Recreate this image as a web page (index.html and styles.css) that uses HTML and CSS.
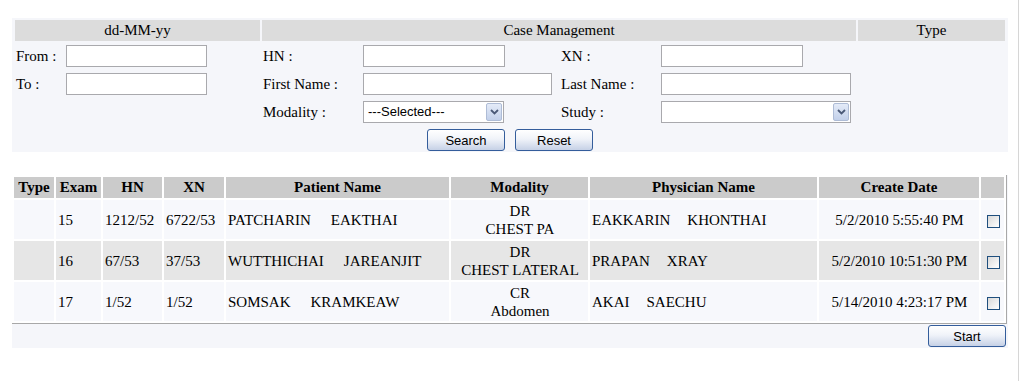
FILE: index.html
```html
<!DOCTYPE html>
<html lang="en">
<head>
  <meta charset="UTF-8">
  <title>Case Management</title>
  <link rel="stylesheet" href="styles.css">
</head>
<body>
  <div class="page">

    <!-- search form -->
    <div class="search-panel">
      <div class="hd">dd-MM-yy</div>
      <div class="hd">Case Management</div>
      <div class="hd">Type</div>

      <div class="date-fields">
        <label>From :</label>
        <input class="txt w141" type="text">
        <label>To :</label>
        <input class="txt w141" type="text">
      </div>

      <div class="case-fields">
        <label>HN :</label>
        <div><input class="txt w142" type="text"></div>
        <label>XN :</label>
        <div><input class="txt w142" type="text"></div>

        <label>First Name :</label>
        <div><input class="txt w189" type="text"></div>
        <label>Last Name :</label>
        <div><input class="txt w190" type="text"></div>

        <label>Modality :</label>
        <div>
          <div class="select w141">
            <span class="select-text">---Selected---</span>
            <span class="select-btn"><svg width="9" height="6" viewBox="0 0 9 6"><polyline points="1,1 4.5,4.5 8,1" fill="none" stroke="#4a5977" stroke-width="1.8"/></svg></span>
          </div>
        </div>
        <label>Study :</label>
        <div>
          <div class="select w190">
            <span class="select-text"></span>
            <span class="select-btn"><svg width="9" height="6" viewBox="0 0 9 6"><polyline points="1,1 4.5,4.5 8,1" fill="none" stroke="#4a5977" stroke-width="1.8"/></svg></span>
          </div>
        </div>
      </div>

      <div></div>

      <div class="buttons">
        <button class="btn">Search</button>
        <button class="btn">Reset</button>
      </div>
    </div>

    <!-- result list -->
    <div class="results">
      <table class="grid">
        <thead>
          <tr>
            <th class="c-type">Type</th>
            <th class="c-exam">Exam</th>
            <th class="c-hn">HN</th>
            <th class="c-xn">XN</th>
            <th class="c-pat">Patient Name</th>
            <th class="c-mod">Modality</th>
            <th class="c-phy">Physician Name</th>
            <th class="c-date">Create Date</th>
            <th class="c-chk"></th>
          </tr>
        </thead>
        <tbody>
          <tr>
            <td></td>
            <td>15</td>
            <td>1212/52</td>
            <td>6722/53</td>
            <td><span>PATCHARIN</span><span class="last">EAKTHAI</span></td>
            <td class="center">DR<br>CHEST PA</td>
            <td><span>EAKKARIN</span><span class="last-sm">KHONTHAI</span></td>
            <td class="center">5/2/2010 5:55:40 PM</td>
            <td class="center"><span class="check"></span></td>
          </tr>
          <tr class="alt">
            <td></td>
            <td>16</td>
            <td>67/53</td>
            <td>37/53</td>
            <td><span>WUTTHICHAI</span><span class="last">JAREANJIT</span></td>
            <td class="center">DR<br>CHEST LATERAL</td>
            <td><span>PRAPAN</span><span class="last-sm">XRAY</span></td>
            <td class="center">5/2/2010 10:51:30 PM</td>
            <td class="center"><span class="check"></span></td>
          </tr>
          <tr>
            <td></td>
            <td>17</td>
            <td>1/52</td>
            <td>1/52</td>
            <td><span>SOMSAK</span><span class="last">KRAMKEAW</span></td>
            <td class="center">CR<br>Abdomen</td>
            <td><span>AKAI</span><span class="last-sm">SAECHU</span></td>
            <td class="center">5/14/2010 4:23:17 PM</td>
            <td class="center"><span class="check"></span></td>
          </tr>
        </tbody>
      </table>
      <div class="actions">
        <button class="btn">Start</button>
      </div>
    </div>

  </div>
</body>
</html>
```

FILE: styles.css
```css
body {
  margin: 0;
  background: #fff;
  color: #000;
  font-family: 'Liberation Serif', 'Times New Roman', serif;
  font-size: 15px;
}

.page {
  width: 1019px;
  min-height: 381px;
  border-right: 1px solid #d6d6d6;
  padding-top: 18px;
  box-sizing: border-box;
}

/* ---- search form ---- */
.search-panel {
  margin-left: 12px;
  width: 996px;
  box-sizing: border-box;
  padding: 2px 3px 1px;
  background: #f5f6fa;
  display: grid;
  grid-template-columns: 245px 594px 1fr;
  column-gap: 2px;
}

.hd {
  background: #dcdcdc;
  height: 21px;
  line-height: 21px;
  text-align: center;
}

.date-fields {
  margin-top: 4px;
  padding-left: 1px;
  display: grid;
  grid-template-columns: 50px 141px;
  grid-auto-rows: 22px;
  row-gap: 6px;
  align-items: center;
}

.case-fields {
  margin-top: 4px;
  padding-left: 1px;
  display: grid;
  grid-template-columns: 100px 198px 100px 192px;
  grid-auto-rows: 22px;
  row-gap: 6px;
  align-items: center;
}

.case-fields > div {
  display: flex;
}

.txt {
  height: 22px;
  box-sizing: border-box;
  border: 1px solid #a9a9ad;
  background: #fff;
  margin: 0;
  padding: 0 3px;
  font-family: 'Liberation Sans', Arial, sans-serif;
  font-size: 13px;
}

.w141 { width: 141px; }
.w142 { width: 142px; }
.w189 { width: 189px; }
.w190 { width: 190px; }

.select {
  height: 22px;
  box-sizing: border-box;
  border: 1px solid #a9a9ad;
  background: #fff;
  display: flex;
  align-items: stretch;
  padding: 1px;
  font-family: 'Liberation Sans', Arial, sans-serif;
  font-size: 13px;
}

.select-text {
  flex: 1;
  padding-left: 3px;
  line-height: 18px;
}

.select-btn {
  width: 16px;
  box-sizing: border-box;
  border: 1px solid #aebcd6;
  border-radius: 2px;
  background: linear-gradient(#e4ebf8, #c2d0ea);
  display: flex;
  align-items: center;
  justify-content: center;
}

.buttons {
  grid-column: 1 / -1;
  margin-top: 6px;
  display: flex;
  justify-content: center;
  gap: 10px;
}

.btn {
  width: 78px;
  height: 22px;
  margin: 0;
  padding: 0;
  border: 1px solid #345d9b;
  border-radius: 3px;
  background: linear-gradient(#ffffff, #f0f3f9 45%, #c6d1e6);
  color: #000;
  font-family: 'Liberation Sans', Arial, sans-serif;
  font-size: 13px;
}

/* ---- result grid ---- */
.results {
  margin: 23px 0 0 12px;
  width: 996px;
  background: #f5f6fa;
  padding-bottom: 1px;
}

.grid {
  width: 995px;
  table-layout: fixed;
  border-collapse: separate;
  border-spacing: 2px;
  border-right: 1px solid #a8a8a8;
  border-bottom: 1px solid #a8a8a8;
  background: #fff;
}

.grid th {
  background: #cbcbcb;
  height: 21px;
  padding: 0;
  font-weight: bold;
  text-align: center;
  white-space: nowrap;
}

.c-type { width: 40px; }
.c-exam { width: 45px; }
.c-hn { width: 59px; }
.c-xn { width: 60px; }
.c-pat { width: 223px; }
.c-mod { width: 137px; }
.c-phy { width: 227px; }
.c-date { width: 160px; }
.c-chk { width: 23px; }

.grid tbody tr {
  height: 39px;
  background: #f7f8fc;
}

.grid tbody tr.alt {
  background: #e6e6e6;
}

.grid td {
  padding: 0 1px 0 2px;
  line-height: 18px;
  vertical-align: middle;
  white-space: nowrap;
}

.grid td.center {
  text-align: center;
}

.last { margin-left: 20px; }
.last-sm { margin-left: 17px; }

.check {
  display: inline-block;
  width: 13px;
  height: 13px;
  box-sizing: border-box;
  border: 1px solid #1f4f7e;
  background: linear-gradient(135deg, #d9d9d9, #f4f4f4 70%, #fff);
  vertical-align: middle;
}

.actions {
  display: flex;
  justify-content: flex-end;
  padding: 1px 2px 0 0;
}
```
